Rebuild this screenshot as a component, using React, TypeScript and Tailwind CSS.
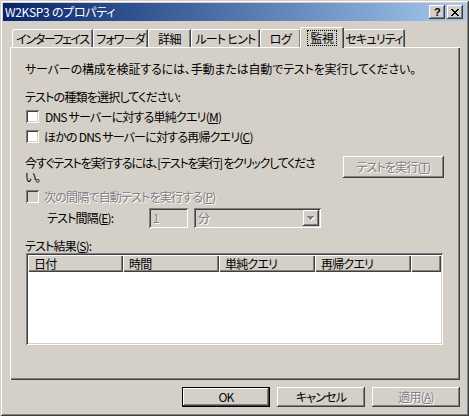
const raised =
  "shadow-[inset_-1px_-1px_#404040,inset_1px_1px_#ffffff,inset_-2px_-2px_#808080,inset_2px_2px_#d4d0c8]";
const sunken =
  "shadow-[inset_1px_1px_#808080,inset_-1px_-1px_#ffffff,inset_2px_2px_#404040,inset_-2px_-2px_#d4d0c8]";
const disabledText = "text-[#808080] [text-shadow:1px_1px_0_#ffffff]";

const tabs = [
  { label: "インターフェイス", w: "w-[81px]", t: "tracking-[-1.4px]" },
  { label: "フォワーダ", w: "w-[55px]", t: "tracking-[-0.8px]" },
  { label: "詳細", w: "w-[43px]", t: "tracking-[-0.5px]" },
  { label: "ルート ヒント", w: "w-[69px]", t: "tracking-[-0.8px]" },
  { label: "ログ", w: "w-[41px]", t: "tracking-[-0.5px]" },
  { label: "監視", w: "w-[44px]", t: "tracking-[-0.5px]", active: true },
  { label: "セキュリティ", w: "w-[62px]", t: "tracking-[-0.8px]" },
];

const Mn = ({ c }: { c: string }) => (
  <>
    (<span className="underline underline-offset-1">{c}</span>)
  </>
);

const Checkbox = ({ disabled }: { disabled?: boolean }) => (
  <span
    className={`w-[13px] h-[13px] shrink-0 ${sunken} ${disabled ? "bg-[#d4d0c8]" : "bg-white"}`}
  />
);

const Button = ({
  children,
  className = "",
  primary,
}: {
  children: React.ReactNode;
  className?: string;
  primary?: boolean;
}) => (
  <div
    className={`flex shrink-0 items-center justify-center whitespace-nowrap bg-[#d4d0c8] ${
      primary
        ? "border border-black shadow-[inset_-1px_-1px_#404040,inset_1px_1px_#ffffff,inset_-2px_-2px_#808080]"
        : raised
    } ${className}`}
  >
    {children}
  </div>
);

const columns = [
  { label: "日付", w: "w-[95px]" },
  { label: "時間", w: "w-[96px]" },
  { label: "単純クエリ", w: "w-[96px]" },
  { label: "再帰クエリ", w: "w-[96px]" },
];

export default function App() {
  return (
    <div
      className={`w-[469px] h-[416px] bg-[#d4d0c8] p-[3px] flex flex-col text-[12px] leading-[14px] tracking-[-0.8px] text-black whitespace-nowrap font-['Noto_Sans_CJK_JP',sans-serif] [font-feature-settings:'palt'] shadow-[inset_1px_1px_#d4d0c8,inset_-1px_-1px_#404040,inset_2px_2px_#ffffff,inset_-2px_-2px_#808080]`}
    >
      {/* title bar */}
      <div className="h-[18px] flex items-center bg-linear-to-r from-[#0a246a] to-[#a6caf0] pl-[2px] pr-[3px]">
        <span className="text-white text-[12px] tracking-[-0.3px] flex-1">W2KSP3 のプロパティ</span>
        <div className="flex gap-[2px]">
          <div className={`w-[16px] h-[14px] bg-[#d4d0c8] flex items-center justify-center ${raised}`}>
            <span className="font-['Liberation_Sans',sans-serif] font-bold text-[11px] leading-none mt-[1px]">?</span>
          </div>
          <div className={`w-[16px] h-[14px] bg-[#d4d0c8] flex items-center justify-center ${raised}`}>
            <svg width="8" height="7" viewBox="0 0 8 7" shapeRendering="crispEdges">
              <path d="M0 0h2v1H0zM6 0h2v1H6zM1 1h2v1H1zM5 1h2v1H5zM2 2h4v1H2zM3 3h2v1H3zM2 4h4v1H2zM1 5h2v1H1zM5 5h2v1H5zM0 6h2v1H0zM6 6h2v1H6z" fill="#000" />
            </svg>
          </div>
        </div>
      </div>

      {/* tabs */}
      <div className="mt-[6px] ml-[9px] h-[20px] flex items-end">
        {tabs.map((t) =>
          t.active ? (
            <div
              key={t.label}
              className={`${t.w} ${t.t} h-[21px] -mb-[1px] -mx-[1px] relative z-10 bg-[#d4d0c8] rounded-t-[2px] flex items-start justify-center pt-[3px] shadow-[inset_1px_1px_#ffffff,inset_-1px_0_#404040,inset_-2px_0_#808080]`}
            >
              <span className="border border-dotted border-black px-[2px] leading-[14px]">{t.label}</span>
            </div>
          ) : (
            <div
              key={t.label}
              className={`${t.w} ${t.t} h-[18px] bg-[#d4d0c8] rounded-t-[2px] flex items-center justify-center pt-[1px] shadow-[inset_1px_1px_#ffffff,inset_-1px_0_#404040,inset_-2px_0_#808080]`}
            >
              {t.label}
            </div>
          )
        )}
      </div>

      {/* panel */}
      <div
        className={`ml-[7px] w-[450px] h-[333px] flex flex-col pl-[15px] pt-[15px] shadow-[inset_1px_1px_#ffffff,inset_-1px_-1px_#404040,inset_-2px_-2px_#808080]`}
      >
        <div className="tracking-[-0.15px]">
          サーバーの構成を検証するには、手動または自動でテストを実行してください。
        </div>
        <div className="mt-[14px]">テストの種類を選択してください:</div>

        <div className="mt-[6px] ml-[1px] flex items-center gap-[6px] h-[13px]">
          <Checkbox />
          <span>
            DNS サーバーに対する単純クエリ<Mn c="M" />
          </span>
        </div>
        <div className="mt-[7px] ml-[1px] flex items-center gap-[5px] h-[13px]">
          <Checkbox />
          <span>
            ほかの DNS サーバーに対する再帰クエリ<Mn c="C" />
          </span>
        </div>

        <div className="mt-[13px] flex items-start justify-between pr-[16px]">
          <div className="tracking-[-1.2px]">
            今すぐテストを実行するには、[テストを実行] をクリックしてくださ
            <br />
            い。
          </div>
          <Button className="w-[101px] h-[22px]">
            <span className={disabledText}>
              テストを実行<Mn c="T" />
            </span>
          </Button>
        </div>

        <div className="mt-[6px] ml-[1px] flex items-center gap-[5px] h-[13px]">
          <Checkbox disabled />
          <span className={disabledText}>
            次の間隔で自動テストを実行する<Mn c="P" />
          </span>
        </div>

        <div className="mt-[5px] flex items-center h-[20px]">
          <span className="ml-[22px] w-[102px]">
            テスト間隔<Mn c="E" />:
          </span>
          <div className={`w-[39px] h-[20px] flex items-center pl-[4px] ${sunken}`}>
            <span className={disabledText}>1</span>
          </div>
          <div className={`ml-[6px] w-[127px] h-[20px] flex items-center justify-between pl-[4px] pr-[2px] ${sunken}`}>
            <span className={disabledText}>分</span>
            <div className={`w-[16px] h-[16px] bg-[#d4d0c8] flex items-center justify-center ${raised}`}>
              <svg width="8" height="5" viewBox="0 0 8 5" shapeRendering="crispEdges">
                <path d="M1 1h7v1H1zM2 2h5v1H2zM3 3h3v1H3zM4 4h1v1H4z" fill="#ffffff" />
                <path d="M0 0h7v1H0zM1 1h5v1H1zM2 2h3v1H2zM3 3h1v1H3z" fill="#808080" />
              </svg>
            </div>
          </div>
        </div>

        <div className="mt-[11px]">
          テスト結果<Mn c="S" />:
        </div>

        <div className={`ml-[1px] w-[417px] h-[92px] bg-white p-[2px] ${sunken}`}>
          <div className="flex h-[17px]">
            {columns.map((c) => (
              <div
                key={c.label}
                className={`${c.w} h-[17px] bg-[#d4d0c8] flex items-center pl-[6px] shadow-[inset_1px_1px_#ffffff,inset_-1px_-1px_#404040,inset_-2px_-2px_#808080]`}
              >
                {c.label}
              </div>
            ))}
            <div className="flex-1 h-[17px] bg-[#d4d0c8] shadow-[inset_1px_1px_#ffffff,inset_-1px_-1px_#404040,inset_-2px_-2px_#808080]" />
          </div>
        </div>
      </div>

      {/* bottom buttons */}
      <div className="mt-[7px] flex justify-end gap-[7px] mr-[6px]">
        <Button primary className="w-[88px] h-[20px]">
          OK
        </Button>
        <Button className="w-[88px] h-[20px]">キャンセル</Button>
        <Button className="w-[88px] h-[20px]">
          <span className={disabledText}>
            適用<Mn c="A" />
          </span>
        </Button>
      </div>
    </div>
  );
}
